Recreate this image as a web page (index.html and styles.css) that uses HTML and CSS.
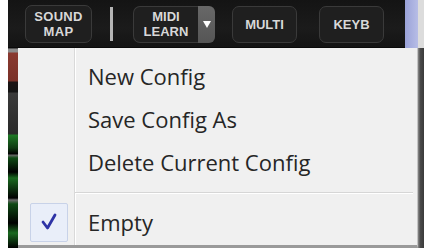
FILE: index.html
```html
<!DOCTYPE html>
<html>
<head>
<meta charset="utf-8">
<link rel="stylesheet" href="styles.css">
</head>
<body>
<div class="screen">
  <div class="top">
    <div class="gutter"></div>
    <div class="topbar">
      <div class="btn btn-sound">SOUND<br>MAP</div>
      <div class="vsep"></div>
      <div class="split">
        <div class="btn btn-midi">MIDI<br>LEARN</div>
        <div class="drop"><svg width="8" height="7" viewBox="0 0 8 7"><path d="M0 0 H8 L4 7 Z" fill="#fff"/></svg></div>
      </div>
      <div class="btn btn-multi">MULTI</div>
      <div class="btn btn-keyb">KEYB</div>
    </div>
    <div class="accent"></div>
    <div class="edge-top"></div>
  </div>
  <div class="bottom">
    <div class="gutter"></div>
    <div class="strip"></div>
    <div class="menu">
      <div class="item"><div class="icon"></div><span class="label">New Config</span></div>
      <div class="item"><div class="icon"></div><span class="label">Save Config As</span></div>
      <div class="item"><div class="icon"></div><span class="label">Delete Current Config</span></div>
      <div class="hsep"></div>
      <div class="item item-last">
        <div class="icon"><div class="check"><svg width="20" height="20" viewBox="0 0 20 20"><path d="M4 10 L8.5 16 L16 3" fill="none" stroke="#2e33a6" stroke-width="2.8" stroke-linecap="round" stroke-linejoin="round"/></svg></div></div>
        <span class="label">Empty</span>
      </div>
    </div>
    <div class="edge-right"></div>
  </div>
</div>
</body>
</html>
```
FILE: styles.css
```css
html, body {
  margin: 0;
  padding: 0;
  background: #ffffff;
}
.screen {
  width: 424px;
  height: 248px;
  display: flex;
  flex-direction: column;
  overflow: hidden;
}
.top {
  display: flex;
  height: 48px;
}
.gutter {
  width: 8px;
  background: #ffffff;
  flex: none;
}
.topbar {
  width: 397px;
  background: linear-gradient(#141414, #1b1b1b 60%, #141414);
  border-bottom: 1px solid #0a0a0a;
  box-sizing: border-box;
  display: flex;
  align-items: center;
  padding-left: 17px;
  padding-top: 1px;
}
.accent {
  width: 13px;
  background: linear-gradient(90deg, #9aa2d8, #b7bde6);
}
.edge-top {
  flex: 1;
  background: #dcdcdc;
}
.btn {
  box-sizing: border-box;
  height: 37px;
  border: 1px solid #3a3a3a;
  border-radius: 7px;
  background: #1f1f1f;
  color: #d8d8d8;
  font-family: "Liberation Sans", Arial, sans-serif;
  font-weight: bold;
  font-size: 13px;
  line-height: 15px;
  display: flex;
  align-items: center;
  justify-content: center;
  text-align: center;
}
.btn-sound {
  width: 67px;
  height: 38px;
  letter-spacing: 0.3px;
}
.vsep {
  width: 3px;
  height: 34px;
  background: #b5b5b5;
  margin-left: 18px;
}
.split {
  display: flex;
  margin-left: 20px;
  height: 37px;
}
.btn-midi {
  width: 65px;
  border-radius: 7px 0 0 7px;
  border-right: none;
}
.drop {
  width: 17px;
  box-sizing: border-box;
  background: linear-gradient(#686868, #555555);
  border-radius: 0 6px 6px 0;
  display: flex;
  align-items: center;
  justify-content: center;
}
.btn-multi {
  width: 65px;
  margin-left: 17px;
}
.btn-keyb {
  width: 65px;
  margin-left: 22px;
}
.bottom {
  display: flex;
  flex: 1;
}
.strip {
  width: 10px;
  flex: none;
  background: linear-gradient(#1a1a1a 0px, #8d8d8d 1px, #8d8d8d 4px, #8a3a30 5px, #7a3128 33px, #1c1414 34px, #141414 44px, #3a3a3a 45px, #2a2a2a 86px, #1f7a26 87px, #0f3a12 100px, #000 106px, #6a6a6a 107px, #0e4a14 110px, #000 124px, #1a6a20 130px, #000 150px, #6a6a6a 152px, #0e4a14 156px, #000 175px, #1a6a20 185px, #000 200px);
}
.menu {
  width: 400px;
  flex: none;
  box-sizing: border-box;
  background:
    linear-gradient(90deg, transparent 56px, #d9d9d9 56px, #d9d9d9 57px, #ffffff 57px, #ffffff 58px, transparent 58px),
    #f0f0f0;
  border-right: 1px solid #c4c4c4;
  border-bottom: 3px solid #9a9a9a;
  padding-top: 6px;
  display: flex;
  flex-direction: column;
  font-family: "Open Sans", "Noto Sans", sans-serif;
  font-size: 22px;
  color: #262626;
}
.item {
  height: 43px;
  display: flex;
  align-items: center;
}
.icon {
  width: 57px;
  height: 100%;
  flex: none;
  display: flex;
  align-items: center;
  justify-content: center;
}
.label {
  padding-left: 13px;
}
.hsep {
  height: 18px;
  margin-left: 57px;
  margin-right: 4px;
  background: linear-gradient(transparent 9px, #d6d6d6 9px, #d6d6d6 10px, #ffffff 10px, #ffffff 11px, transparent 11px);
}
.item-last {
  height: 42px;
}
.check {
  width: 38px;
  height: 39px;
  box-sizing: border-box;
  margin-left: 5px;
  border: 1px solid #c8d2e8;
  border-radius: 2px;
  background: #e9eef9;
  display: flex;
  align-items: center;
  justify-content: center;
}
.edge-right {
  flex: 1;
  background: linear-gradient(90deg, #8a8a8a, #4a4a4a 40%, #3a3a3a);
}
```
